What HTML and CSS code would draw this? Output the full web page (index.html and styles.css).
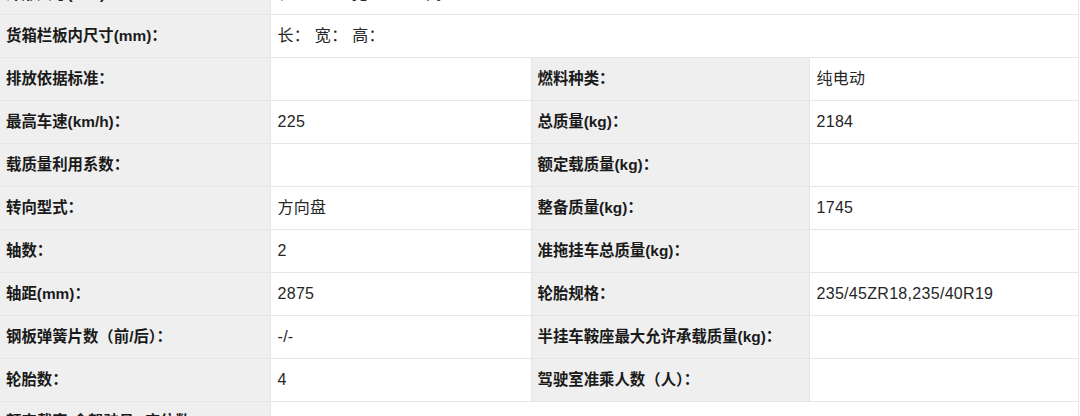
FILE: index.html
```html
<!DOCTYPE html>
<html lang="zh-CN">
<head>
<meta charset="utf-8">
<title>车辆参数</title>
<link rel="stylesheet" href="styles.css">
</head>
<body>
<table class="spec">
  <colgroup>
    <col class="c-label">
    <col class="c-value">
    <col class="c-label2">
    <col class="c-value2">
  </colgroup>
  <tbody>
    <tr class="first">
      <th>外形尺寸(mm)：</th>
      <td colspan="3">长：4785 宽：1895 高：1430</td>
    </tr>
    <tr>
      <th>货箱栏板内尺寸(mm)：</th>
      <td colspan="3">长： 宽： 高：</td>
    </tr>
    <tr>
      <th>排放依据标准：</th>
      <td></td>
      <th>燃料种类：</th>
      <td>纯电动</td>
    </tr>
    <tr>
      <th>最高车速(km/h)：</th>
      <td>225</td>
      <th>总质量(kg)：</th>
      <td>2184</td>
    </tr>
    <tr>
      <th>载质量利用系数：</th>
      <td></td>
      <th>额定载质量(kg)：</th>
      <td></td>
    </tr>
    <tr>
      <th>转向型式：</th>
      <td>方向盘</td>
      <th>整备质量(kg)：</th>
      <td>1745</td>
    </tr>
    <tr>
      <th>轴数：</th>
      <td>2</td>
      <th>准拖挂车总质量(kg)：</th>
      <td></td>
    </tr>
    <tr>
      <th>轴距(mm)：</th>
      <td>2875</td>
      <th>轮胎规格：</th>
      <td>235/45ZR18,235/40R19</td>
    </tr>
    <tr>
      <th>钢板弹簧片数（前/后）：</th>
      <td>-/-</td>
      <th>半挂车鞍座最大允许承载质量(kg)：</th>
      <td></td>
    </tr>
    <tr>
      <th>轮胎数：</th>
      <td>4</td>
      <th>驾驶室准乘人数（人）：</th>
      <td></td>
    </tr>
    <tr class="last">
      <th>额定载客(含驾驶员)(座位数)：</th>
      <td colspan="3"></td>
    </tr>
  </tbody>
</table>
</body>
</html>
```

FILE: styles.css
```css
html, body {
  margin: 0;
  padding: 0;
  background: #ffffff;
}

body {
  font-family: "Liberation Sans", "Noto Sans CJK SC", sans-serif;
  font-size: 15.4px;
  color: #222222;
  overflow: hidden;
  height: 416px;
}

.spec {
  margin-top: -29px;
  width: 1078px;
  table-layout: fixed;
  border-collapse: collapse;
}

.c-label { width: 270px; }
.c-value { width: 261px; }
.c-label2 { width: 278px; }
.c-value2 { width: 269px; }

.spec th,
.spec td {
  height: 43px;
  padding: 0 7px;
  border: 1px solid #e6e6e6;
  text-align: left;
  vertical-align: middle;
  white-space: nowrap;
  box-sizing: border-box;
  line-height: 20px;
}

.spec th {
  background: #efefef;
  font-weight: bold;
  color: #1a1a1a;
  padding-left: 6px;
}

.spec td {
  background: #ffffff;
  font-weight: normal;
  color: #262626;
  font-size: 16px;
  letter-spacing: 0.3px;
}

.spec tr:first-child th,
.spec tr:first-child td {
  border-top: none;
}

.spec th:first-child {
  border-left: none;
}

.spec tr.first th,
.spec tr.first td {
  padding-top: 3px;
}

.spec tr.last th,
.spec tr.last td {
  vertical-align: top;
  padding-top: 10px;
}
```
